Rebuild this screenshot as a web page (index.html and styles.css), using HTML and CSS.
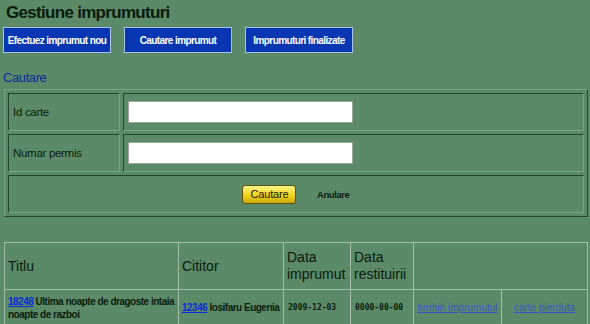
FILE: index.html
```html
<!DOCTYPE html>
<html lang="ro">

<head>
    <meta charset="UTF-8">
    <title>Gestiune imprumuturi</title>
    <link rel="stylesheet" href="styles.css">
</head>

<body>
    <h1 class="title">Gestiune imprumuturi</h1>

    <div class="nav">
        <button type="button" class="navbtn">Efectuez imprumut nou</button>
        <button type="button" class="navbtn">Cautare imprumut</button>
        <button type="button" class="navbtn">Imprumuturi finalizate</button>
    </div>

    <h2 class="section">Cautare</h2>

    <table class="search">
        <tr>
            <td class="label">Id carte</td>
            <td class="field"><input type="text" class="txt"></td>
        </tr>
        <tr>
            <td class="label">Numar permis</td>
            <td class="field"><input type="text" class="txt"></td>
        </tr>
        <tr>
            <td colspan="2" class="actions">
                <button type="button" class="gobtn">Cautare</button>
                <span class="cancel">Anulare</span>
            </td>
        </tr>
    </table>

    <table class="list">
        <colgroup>
            <col class="c1">
            <col class="c2">
            <col class="c3">
            <col class="c4">
            <col class="c5">
            <col>
        </colgroup>
        <tr>
            <th>Titlu</th>
            <th>Cititor</th>
            <th>Data<br>imprumut</th>
            <th>Data<br>restituirii</th>
            <th colspan="2"></th>
        </tr>
        <tr>
            <td class="book"><a href="#" class="id">18248</a> Ultima noapte de dragoste intaia noapte de razboi</td>
            <td class="book"><a href="#" class="id">12346</a> Iosifaru Eugenia</td>
            <td class="date">2009-12-03</td>
            <td class="date">0000-00-00</td>
            <td class="act"><a href="#">termin imprumutul</a></td>
            <td class="act"><a href="#">carte pierduta</a></td>
        </tr>
    </table>
</body>

</html>
```

FILE: styles.css
```css
* {
    margin: 0px;
    padding: 0px;
    font-family: 'Liberation Sans', Arial, sans-serif;
}

body {
    background-color: #5b8a68;
    color: #0c1c0e;
    width: 590px;
    overflow: hidden;
}

.title {
    font-size: 17px;
    line-height: 20px;
    font-weight: bold;
    letter-spacing: -0.7px;
    margin: 3px 0 0 6px;
    color: #0b1a0c;
}

.nav {
    display: flex;
    gap: 13px;
    margin: 4px 0 0 3px;
}

.navbtn {
    width: 108px;
    height: 26px;
    border: 1px solid #a9c2e6;
    background-color: #0636b2;
    color: white;
    font-size: 10px;
    font-weight: bold;
    letter-spacing: -0.6px;
    white-space: nowrap;
}

.section {
    font-size: 13px;
    line-height: 18px;
    font-weight: normal;
    letter-spacing: -0.4px;
    color: #0d2a98;
    margin: 16px 0 0 3px;
}

.search {
    margin: 2px 0 0 4px;
    width: 584px;
    border-spacing: 3px;
    border: 1px solid;
    border-color: #78a384 #24432c #24432c #78a384;
}

.search td {
    border: 1px solid;
    border-color: #24432c #78a384 #78a384 #24432c;
    height: 36px;
}

.label {
    width: 106px;
    padding-left: 4px;
    font-size: 11.5px;
    letter-spacing: -0.3px;
}

.field {
    padding-left: 4px;
}

.txt {
    width: 223px;
    height: 20px;
    border: 1px solid #9aa39c;
    background: white;
    display: block;
}

.actions {
    text-align: center;
}

.gobtn {
    width: 54px;
    height: 19px;
    border: 1px solid #5c4f08;
    border-radius: 3px;
    background: linear-gradient(to bottom, #fdf38a, #f2d51a 55%, #c9a708);
    color: #1a1600;
    font-size: 11px;
    letter-spacing: -0.2px;
    vertical-align: middle;
}

.cancel {
    font-size: 9.5px;
    font-weight: bold;
    letter-spacing: -0.4px;
    margin-left: 16px;
    vertical-align: middle;
}

.list {
    margin: 25px 0 0 4px;
    width: 584px;
    table-layout: fixed;
    border-collapse: collapse;
    border: 1px solid #a3bea8;
}

.c1 { width: 174px; }
.c2 { width: 105px; }
.c3 { width: 67px; }
.c4 { width: 63px; }
.c5 { width: 88px; }

.list th,
.list td {
    border: 1px solid #a3bea8;
    text-align: left;
    vertical-align: middle;
}

.list th {
    height: 46px;
    padding: 0 3px;
    font-size: 14px;
    line-height: 17px;
    font-weight: normal;
    color: #0b1a0c;
}

.list td {
    height: 35px;
    padding: 0 3px;
    font-size: 10px;
    line-height: 13px;
    font-weight: bold;
}

.list td.book {
    letter-spacing: -0.5px;
}

.id {
    color: #0a2ad8;
}

.list td.date {
    font-family: 'DejaVu Sans Mono', 'Liberation Mono', monospace;
    font-size: 8px;
    padding-left: 4px;
}

.list td.act {
    text-align: center;
    font-weight: normal;
}

.act a {
    color: #3c52c8;
}
```
